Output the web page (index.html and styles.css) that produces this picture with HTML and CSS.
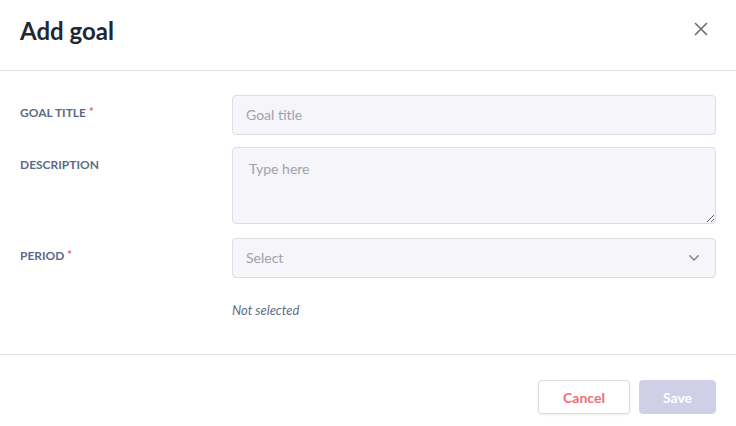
FILE: index.html
```html
<!DOCTYPE html>
<html lang="en">
<head>
<meta charset="utf-8">
<title>Add goal</title>
<link rel="stylesheet" href="styles.css">
</head>
<body>
<div class="modal">
  <header class="modal-header">
    <h1 class="modal-title">Add goal</h1>
    <button class="close-btn" aria-label="Close">
      <svg width="14" height="14" viewBox="0 0 14 14"><path d="M1.5 1.5 L12.5 12.5 M12.5 1.5 L1.5 12.5" stroke="#666a70" stroke-width="1.6" stroke-linecap="round" fill="none"/></svg>
    </button>
  </header>
  <section class="modal-body">
    <div class="form-row row-title">
      <label class="field-label">GOAL TITLE <span class="req">*</span></label>
      <input class="field-input" type="text" placeholder="Goal title">
    </div>
    <div class="form-row row-desc">
      <label class="field-label">DESCRIPTION</label>
      <textarea class="field-textarea" placeholder="Type here"></textarea>
    </div>
    <div class="form-row row-period">
      <label class="field-label">PERIOD <span class="req">*</span></label>
      <div class="field-select">
        <span class="select-placeholder">Select</span>
        <svg width="10" height="6" viewBox="0 0 10 6"><path d="M0.8 0.8 L5 5 L9.2 0.8" stroke="#7a7d85" stroke-width="1.3" fill="none" stroke-linecap="round" stroke-linejoin="round"/></svg>
      </div>
    </div>
    <div class="form-row row-note">
      <span></span>
      <p class="note">Not selected</p>
    </div>
  </section>
  <footer class="modal-footer">
    <button class="btn btn-cancel">Cancel</button>
    <button class="btn btn-save">Save</button>
  </footer>
</div>
</body>
</html>
```

FILE: styles.css
```css
* { box-sizing: border-box; }
html, body { margin: 0; padding: 0; background: #ffffff; }
body { font-family: Lato, "Open Sans", sans-serif; color: #1f2733; }

.modal { width: 736px; }

.modal-header {
  height: 71px;
  padding: 16px 20px 0 20px;
  border-bottom: 1px solid #dde1e7;
  display: flex;
  justify-content: space-between;
  align-items: flex-start;
}
.modal-title {
  margin: 0;
  font-size: 24px;
  line-height: 30px;
  font-weight: 700;
  color: #1f2733;
}
.close-btn {
  margin: 6px 8px 0 0;
  padding: 0;
  width: 14px;
  height: 14px;
  border: none;
  background: none;
  display: flex;
}

.modal-body {
  padding: 24px 20px 35px 20px;
  border-bottom: 1px solid #dde1e7;
}
.form-row {
  display: grid;
  grid-template-columns: 212px 1fr;
}
.row-desc { margin-top: 12px; }
.row-period { margin-top: 14px; }
.row-note { margin-top: 23px; }

.field-label {
  padding-top: 10px;
  font-size: 12px;
  line-height: 16px;
  font-weight: 700;
  color: #5b6b88;
  letter-spacing: 0;
}
.req { color: #f25a68; font-size: 11px; position: relative; top: -1px; }

.field-input, .field-textarea, .field-select {
  width: 100%;
  border: 1px solid #dcdee5;
  border-radius: 4px;
  background: #f5f5fa;
  font-family: Lato, "Open Sans", sans-serif;
  font-size: 14px;
  color: #1f2733;
  outline: none;
}
.field-input {
  height: 40px;
  padding: 0 13px 2px 13px;
  line-height: 20px;
  display: block;
}
.field-textarea {
  display: block;
  height: 77px;
  padding: 11px 16px;
  line-height: 20px;
  resize: vertical;
  margin: 0;
}
.field-input::placeholder, .field-textarea::placeholder { color: #9fa2ad; }

.field-select {
  height: 40px;
  padding: 0 16px 0 13px;
  display: flex;
  align-items: center;
  justify-content: space-between;
}
.select-placeholder { color: #9fa2ad; line-height: 20px; }

.note {
  margin: 0;
  font-size: 13px;
  line-height: 18px;
  font-style: italic;
  color: #5f6d86;
}

.modal-footer {
  padding: 25px 20px 12px 20px;
  display: flex;
  justify-content: flex-end;
  gap: 9px;
}
.btn {
  height: 34px;
  border-radius: 4px;
  font-family: Lato, "Open Sans", sans-serif;
  font-size: 14px;
  font-weight: 700;
  padding: 0;
}
.btn-cancel {
  width: 92px;
  background: #ffffff;
  border: 1px solid #d9dde5;
  color: #f36b76;
  box-shadow: 0 1px 3px rgba(40, 50, 80, 0.08);
}
.btn-save {
  width: 77px;
  background: #d0cfe8;
  border: 1px solid #d0cfe8;
  color: #ffffff;
}
```
